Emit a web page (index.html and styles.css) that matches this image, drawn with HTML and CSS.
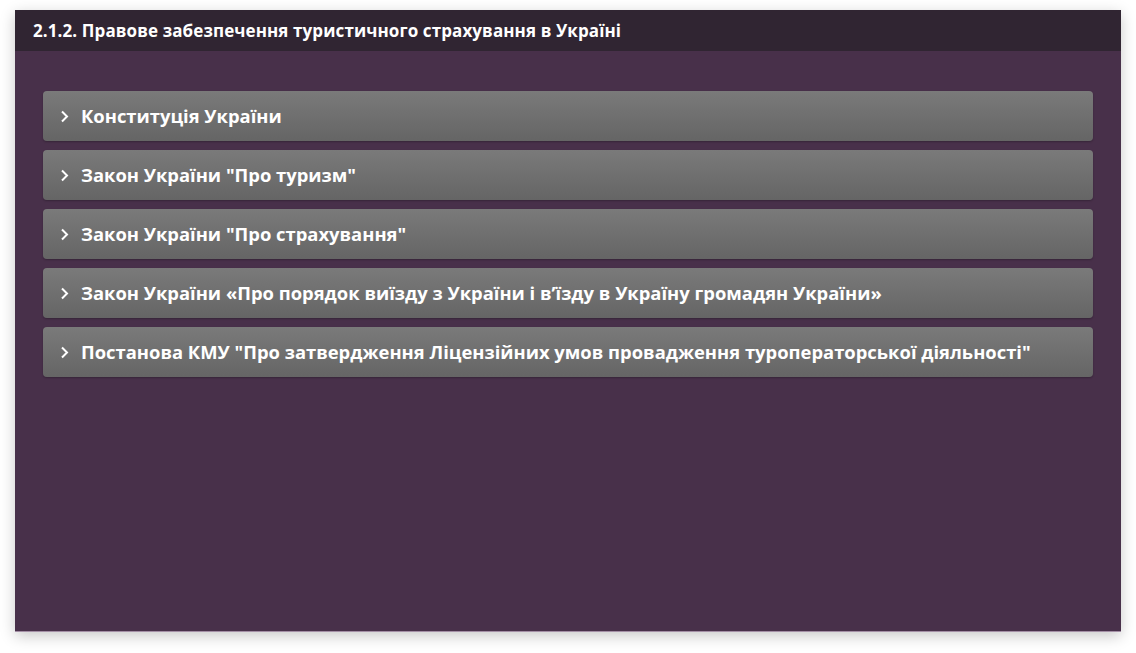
FILE: index.html
```html
<!DOCTYPE html>
<html lang="uk">
<head>
<meta charset="utf-8">
<link rel="stylesheet" href="styles.css">
</head>
<body>
<div class="panel">
  <div class="panel-header">2.1.2. Правове забезпечення туристичного страхування в Україні</div>
  <div class="panel-body">
    <div class="item"><svg class="chev" viewBox="0 0 9 13"><path d="M2 1.5 L7 6.5 L2 11.5"/></svg><span>Конституція України</span></div>
    <div class="item"><svg class="chev" viewBox="0 0 9 13"><path d="M2 1.5 L7 6.5 L2 11.5"/></svg><span>Закон України "Про туризм"</span></div>
    <div class="item"><svg class="chev" viewBox="0 0 9 13"><path d="M2 1.5 L7 6.5 L2 11.5"/></svg><span>Закон України "Про страхування"</span></div>
    <div class="item"><svg class="chev" viewBox="0 0 9 13"><path d="M2 1.5 L7 6.5 L2 11.5"/></svg><span>Закон України «Про порядок виїзду з України і в’їзду в Україну громадян України»</span></div>
    <div class="item"><svg class="chev" viewBox="0 0 9 13"><path d="M2 1.5 L7 6.5 L2 11.5"/></svg><span>Постанова КМУ "Про затвердження Ліцензійних умов провадження туроператорської діяльності"</span></div>
  </div>
</div>
</body>
</html>
```
FILE: styles.css
```css
html, body {
  margin: 0;
  padding: 0;
  background: #ffffff;
}
body {
  padding: 10px 15px 21px 15px;
  font-family: "Open Sans", "Noto Sans", sans-serif;
  box-sizing: border-box;
  height: 653px;
}
.panel {
  height: 622px;
  display: flex;
  flex-direction: column;
  background: #48304a;
  border-bottom: 1px solid #a48fa6;
  box-shadow: 0 4px 14px rgba(0,0,0,0.22);
  box-sizing: border-box;
}
.panel-header {
  height: 41px;
  background: #302532;
  color: #ffffff;
  font-weight: 700;
  font-size: 17px;
  display: flex;
  align-items: center;
  padding-left: 18px;
  padding-bottom: 1px;
  box-sizing: border-box;
  letter-spacing: 0.1px;
}
.panel-body {
  flex: 1;
  padding: 40px 28px 0 28px;
  display: flex;
  flex-direction: column;
  gap: 9px;
}
.item {
  height: 50px;
  box-sizing: border-box;
  border-radius: 4px;
  background: linear-gradient(#7a7a7a, #656565);
  box-shadow: 0 1px 2px rgba(0,0,0,0.25);
  display: flex;
  align-items: center;
  padding-left: 17px;
  padding-bottom: 2px;
  color: #ffffff;
  font-weight: 700;
  font-size: 18.4px;
}
.chev {
  width: 9px;
  height: 13px;
  margin-right: 12px;
  margin-top: 2px;
  fill: none;
  stroke: #ffffff;
  stroke-width: 2;
}
```
